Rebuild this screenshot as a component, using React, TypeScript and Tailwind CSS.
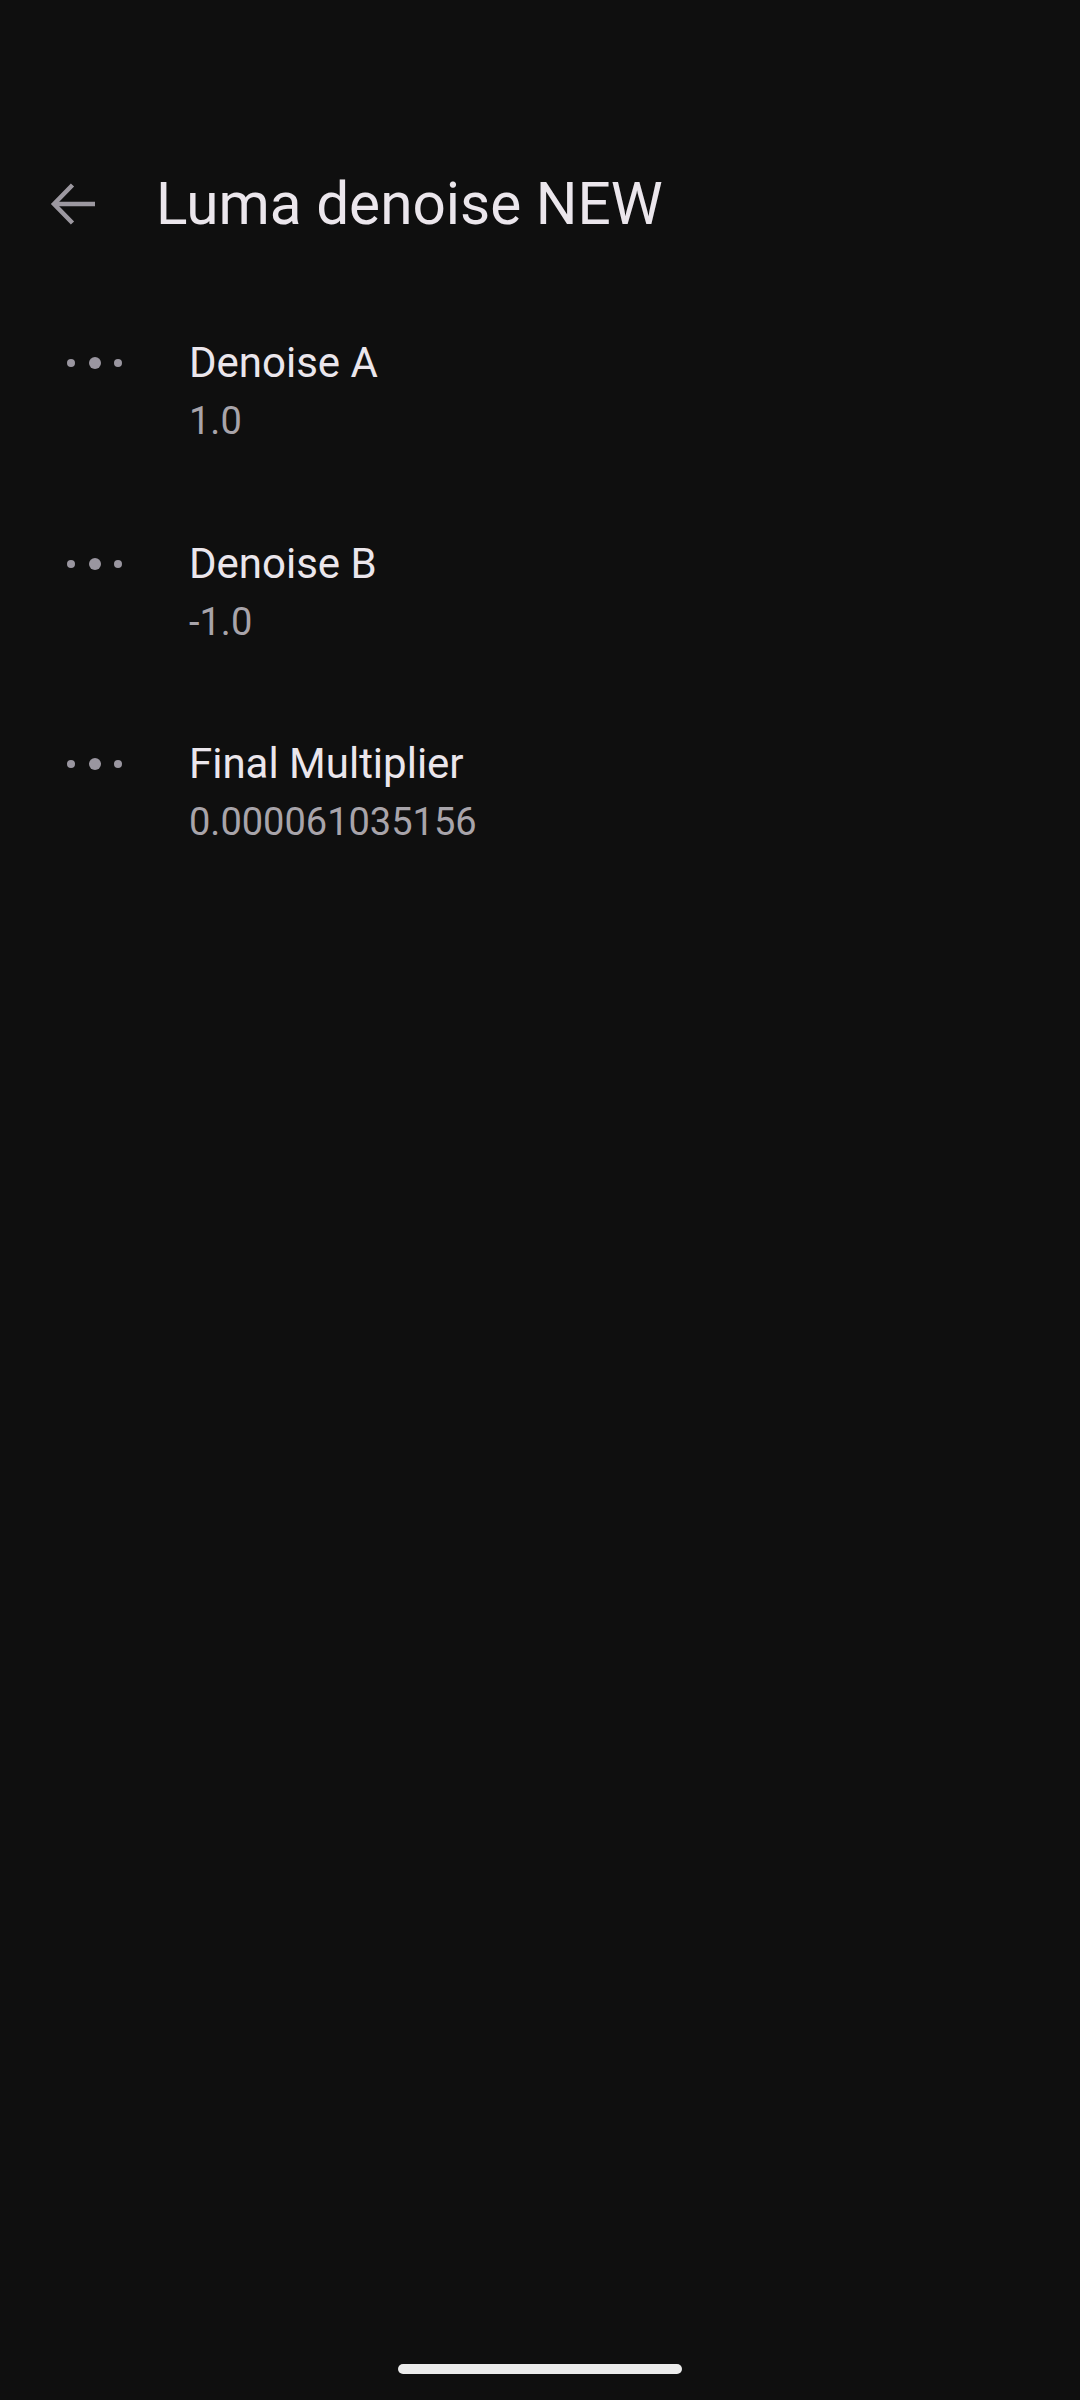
import React from "react";

const items = [
  { title: "Denoise A", value: "1.0" },
  { title: "Denoise B", value: "-1.0" },
  { title: "Final Multiplier", value: "0.000061035156" },
];

function Dots() {
  return (
    <div className="flex items-center gap-[13.5px] pl-[67px] w-[189px] shrink-0">
      <span className="block w-[8px] h-[8px] rounded-full bg-[#9a96a0]" />
      <span className="block w-[12px] h-[12px] rounded-full bg-[#9a96a0]" />
      <span className="block w-[8px] h-[8px] rounded-full bg-[#9a96a0]" />
    </div>
  );
}

export default function App() {
  return (
    <div
      className="w-[1080px] h-[2400px] bg-[#0f0f0f] flex flex-col relative overflow-hidden"
      style={{ fontFamily: "Roboto, 'Open Sans', sans-serif" }}
    >
      <div className="pt-[148px]">
        <div className="h-[112px] flex items-center">
          <div className="w-[156px] shrink-0 flex items-center">
            <svg
              className="ml-[50px]"
              width="46"
              height="44"
              viewBox="0 0 46 44"
              fill="none"
              stroke="#9c98a0"
              strokeWidth="4.5"
            >
              <path d="M45 22 H5" />
              <path d="M22.5 3 L4 22 L22.5 41" />
            </svg>
          </div>
          <div className="text-[58.5px] leading-[112px] text-[#ebe6ec] whitespace-nowrap">
            Luma denoise NEW
          </div>
        </div>
      </div>
      <div className="pt-[31px] flex flex-col">
        {items.map((it) => (
          <div key={it.title} className="flex py-[42.3px]">
            <div className="h-[60px] flex items-center">
              <Dots />
            </div>
            <div className="flex flex-col">
              <div className="text-[42px] leading-[60px] text-[#ebe6ec] whitespace-nowrap">{it.title}</div>
              <div className="text-[38px] leading-[56px] text-[#a8a4aa] whitespace-nowrap">{it.value}</div>
            </div>
          </div>
        ))}
      </div>
      <div className="absolute left-[398px] top-[2364px] w-[284px] h-[10px] rounded-full bg-[#ebebeb]" />
    </div>
  );
}
